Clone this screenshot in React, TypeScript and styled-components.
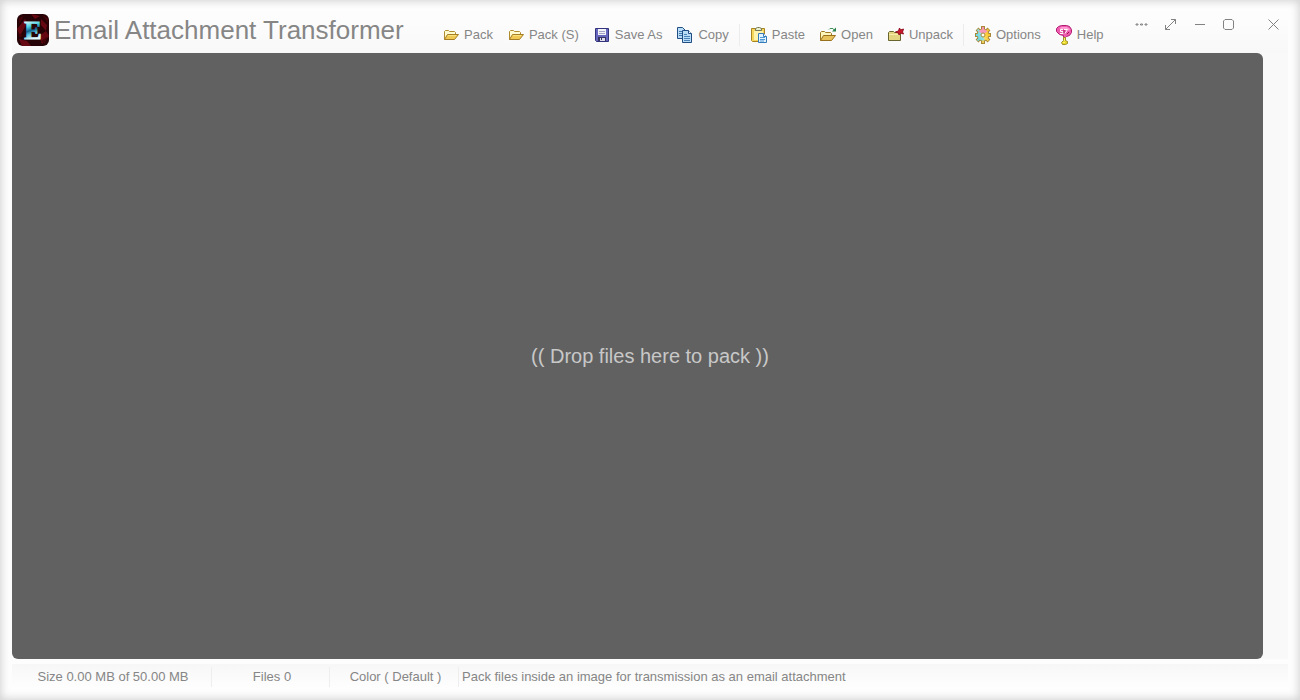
import React from "react";
import styled, { createGlobalStyle } from "styled-components";

const GlobalStyle = createGlobalStyle`
  * { box-sizing: border-box; }
  body {
    margin: 0;
    font-family: "Liberation Sans", Arial, sans-serif;
    font-size: 13px;
    line-height: 16px;
    color: #868686;
    background: #fff;
  }
`;

const Window = styled.div`
  min-height: 100vh;
  display: flex;
  flex-direction: column;
  background: #fdfdfd;
  box-shadow: inset 0 0 8px 1px #cfcfcf;
`;

const TitleBar = styled.header`
  display: flex;
  align-items: flex-start;
  height: 53px;
  margin: 0 12px;
  padding-left: 5px;
  background: linear-gradient(to bottom, transparent 8px, #fdfdfd 16px, #f8f8f8 52px);
`;

const Brand = styled.div`
  flex: 0 0 426px;
  display: flex;
  align-items: center;
  gap: 5px;
  padding-top: 14px;
`;

const Title = styled.h1`
  margin: 0;
  font-size: 26px;
  line-height: 32px;
  font-weight: normal;
  white-space: nowrap;
`;

const Toolbar = styled.nav`
  display: flex;
  align-items: center;
  padding-top: 24px;
`;

const ToolButton = styled.button`
  display: flex;
  align-items: center;
  gap: 5px;
  height: 20px;
  margin: 0 15px 0 0;
  padding: 0;
  border: 0;
  background: none;
  font: inherit;
  color: inherit;
  white-space: nowrap;
  cursor: pointer;
`;

const Separator = styled.span`
  width: 1px;
  height: 22px;
  margin: 0 11px 0 -5px;
  background: #ececec;
`;

const WindowControls = styled.div`
  display: flex;
  margin-left: auto;
  padding-top: 10px;
`;

const ControlButton = styled.button<{ $apart?: boolean }>`
  display: grid;
  place-items: center;
  width: 29px;
  height: 28px;
  margin: 0 0 0 ${(p) => (p.$apart ? "16px" : "0")};
  padding: 0;
  border: 0;
  background: none;
  color: #828282;
  cursor: pointer;
`;

const Middle = styled.div`
  flex: 1;
  display: flex;
  margin: 0 12px;
  padding-right: 25px;
  background: linear-gradient(to right, #fdfdfd 50%, #f9f9f9 50%);
`;

const DropZone = styled.main`
  flex: 1;
  display: grid;
  place-items: center;
  border-radius: 6px;
  background: #616161;
  color: #c8c8c8;
  font-size: 20px;
  line-height: 24px;
  padding-left: 25px;
`;

const StatusBar = styled.footer`
  display: flex;
  align-items: center;
  height: 25px;
  margin: 5px 12px 11px;
  background: linear-gradient(to bottom, #f7f7f7, #fefefe);
`;

const StatusCell = styled.span<{ $width?: number; $line?: boolean }>`
  flex: ${(p) => (p.$width ? `0 0 ${p.$width}px` : "1")};
  padding-left: 3px;
  text-align: ${(p) => (p.$width ? "center" : "left")};
  line-height: 20px;
  border-right: 1px solid ${(p) => (p.$line ? "#eeeeee" : "transparent")};
  white-space: nowrap;
`;

const Logo = () => (
  <svg width="32" height="32" viewBox="0 0 32 32" aria-hidden="true">
    <defs>
      <linearGradient id="letter" x1="0" y1="0" x2="0.200" y2="1">
        <stop offset=".2" stopColor="#dcffff" />
        <stop offset=".4" stopColor="#4fd0e2" />
        <stop offset=".55" stopColor="#12618f" />
        <stop offset=".66" stopColor="#55bfdc" />
        <stop offset=".85" stopColor="#e4fbff" />
      </linearGradient>
      <clipPath id="tile"><rect width="32" height="32" rx="6" /></clipPath>
    </defs>
    <g clipPath="url(#tile)">
      <rect width="32" height="32" fill="#250306" />
      <path d="M0 15L8 5l2 4-7 13zM14 0l9 2-5 3zM24 5l6 6-1 6-5-6zM22 22l7-5 3 5-7 8zM2 25l8 2 4 5H5z" fill="#660811" />
      <path d="M2 4l5-2-5 8zM25 1l6 3v5zM24 27l6-4-2 7zM1 19l5 2-3 3z" fill="#430308" />
    </g>
    <text x="16" y="25" textAnchor="middle" fontFamily="Liberation Serif, serif" fontWeight="bold" fontSize="26" fill="url(#letter)" stroke="url(#letter)" strokeWidth="1">E</text>
  </svg>
);

const Icon = ({ children }: { children: React.ReactNode }) => (
  <svg width="16" height="18" viewBox="0 0 16 18" aria-hidden="true">{children}</svg>
);

const FolderIcon = () => (
  <Icon>
    <path d="M1.5 13.5v-8l1-1h3l1 1h5l1 1v2" fill="#fffbd0" stroke="#b18b30" />
    <path d="M1.5 13.5l3-5h11l-4 5z" fill="#efc954" stroke="#a67d27" />
    <path d="M5 9.5h8" stroke="#f8e37f" />
  </Icon>
);

const SaveIcon = () => (
  <Icon>
    <path d="M1.5 2.5h13v13h-12l-1-1z" fill="#6767bd" stroke="#34347e" />
    <path d="M4 3h8v6H4z" fill="#f3f3fa" />
    <path d="M5 5.5h6M5 7.5h6" stroke="#a4a4c6" />
    <path d="M4 11h8v4H4z" fill="#35355f" />
    <path d="M6 12h5v3H6z" fill="#ddddeb" />
    <path d="M7 12h1v2H7z" fill="#35355f" />
  </Icon>
);

const CopyIcon = () => (
  <Icon>
    <path d="M.5 1.500h5l3 3v8h-8z" fill="#b9dcf7" stroke="#234f87" />
    <path d="M2 5.500h4M2 7.500h4M2 9.500h4" stroke="#3f76ab" />
    <path d="M5.500 4.500h6l3 3v9h-9z" fill="#b9dcf7" stroke="#204c82" />
    <path d="M11.500 4.500v3h3" fill="#fff" stroke="#204c82" />
    <path d="M7 8.500h3M7 10.500h6M7 12.500h6M7 14.500h6" stroke="#4a82b7" />
  </Icon>
);

const PasteIcon = () => (
  <Icon>
    <path d="M.5 2.500h13v13H1.500l-1-1z" fill="#f5d55a" stroke="#a78324" />
    <path d="M3 5h9v9H3z" fill="#fff3ad" />
    <path d="M4.500 4.500v-2l2-1h2l2 1v2z" fill="#e9eed1" stroke="#737650" />
    <path d="M7.500 7.500h5l3 3v6h-8z" fill="#e4f4ff" stroke="#367bb9" />
    <path d="M12.500 7.500v3h3" fill="#fff" stroke="#367bb9" />
    <path d="M9 11.500h5M9 13.500h5M9 15h4" stroke="#4f99d6" />
  </Icon>
);

const OpenIcon = () => (
  <Icon>
    <path d="M.5 14.500v-8l1-1h3l1 1h5l1 1v2" fill="#fff6bb" stroke="#a07a22" />
    <path d="M.5 14.500l3-5h12l-4 5z" fill="#e8c35c" stroke="#98701d" />
    <path d="M9 3.500l1-1h3l1.500 2" fill="none" stroke="#42935e" />
    <path d="M12 5.500h4v-4z" fill="#268047" />
  </Icon>
);

const UnpackIcon = () => (
  <Icon>
    <path d="M.5 14.500v-8l1-1h4l1 1h6v8z" fill="#e4d482" stroke="#68652e" />
    <path d="M1 8.500h11" stroke="#f5ecae" />
    <path d="M11.500 2l1 2 3-1-1 3 1 2-3-1-1.500 2-.5-2-3-1 3-1z" fill="#ce172b" stroke="#951021" />
  </Icon>
);

const OptionsIcon = () => (
  <Icon>
    <defs>
      <linearGradient id="gear" x1="0" y1="0.700" x2="1" y2="0.300">
        <stop offset="0" stopColor="#6fd6e4" />
        <stop offset=".42" stopColor="#9be0dc" />
        <stop offset=".55" stopColor="#ffd95a" />
        <stop offset="1" stopColor="#fac52c" />
      </linearGradient>
    </defs>
    <g stroke="#a8893a" strokeWidth="4">
      <path d="M8 0v18M0 9h16M2 3l12 12M14 3L2 15" />
    </g>
    <circle cx="8" cy="9" r="6.500" fill="#a8893a" />
    <g stroke="url(#gear)" strokeWidth="2">
      <path d="M2.500 3.500l11 11M13.500 3.500l-11 11" />
    </g>
    <path d="M7 1h2v3H7z" fill="#f58fb4" />
    <path d="M7 14h2v3H7z" fill="#f0cf55" />
    <path d="M1 8h3v2H1z" fill="#6fd6e4" />
    <path d="M12 8h3v2h-3z" fill="#fac52c" />
    <circle cx="8" cy="9" r="5.500" fill="url(#gear)" />
    <path d="M3.500 5.500A5.500 5.500 0 0 1 12.500 5.500L10 7H6z" fill="#f799bb" />
    <circle cx="8" cy="9" r="2" fill="#fffdf4" stroke="#a8893a" />
  </Icon>
);

const HelpIcon = () => (
  <svg width="16" height="20" viewBox="0 0 16 20" aria-hidden="true">
    <path d="M.500 3.500l2-2 3-1h5l3 1 2 3v3l-2 3-3 1-1 1h-2v-2l-4-1-3-3z" fill="#ed5aae" stroke="#b01e72" />
    <path d="M3 3l3-1h5l3 2-1 2-2-2H5z" fill="#ff9bd0" />
    <path d="M7 4.500H4.500v2H7v2H4M8 4.500h3.500L9 8.500" fill="none" stroke="#fff" />
    <path d="M8 5v3M11 9l2-2" fill="none" stroke="#971457" />
    <path d="M7.500 12.500h2v3l2 1v2l-2 1h-3l-1-2 2-2z" fill="#e9d72b" stroke="#9f902a" />
    <path d="M8 13h1v3H8zM7 17h2v1H7z" fill="#fff66d" />
  </svg>
);

const ControlIcon = ({ path }: { path: string }) => (
  <svg width="13" height="13" viewBox="0 0 13 13" fill="none" stroke="currentColor" aria-hidden="true">
    <path d={path} />
  </svg>
);

type Tool = { label: string; icon: () => React.ReactElement; separated?: boolean };

const tools: Tool[] = [
  { label: "Pack", icon: FolderIcon },
  { label: "Pack (S)", icon: FolderIcon },
  { label: "Save As", icon: SaveIcon },
  { label: "Copy", icon: CopyIcon },
  { label: "Paste", icon: PasteIcon, separated: true },
  { label: "Open", icon: OpenIcon },
  { label: "Unpack", icon: UnpackIcon },
  { label: "Options", icon: OptionsIcon, separated: true },
  { label: "Help", icon: HelpIcon },
];

const controls = [
  { label: "More", path: "M1 6h2v1H1zM5.500 6h2v1h-2zM10 6h2v1h-2z" },
  { label: "Full screen", path: "M1.500 11.500l10-10M7 1.500h4.500V6M1.500 7v4.500H6" },
  { label: "Minimize", path: "M2 6.500h10" },
  { label: "Maximize", path: "M3 1.500h7l1.500 1.500v7L10 11.500H3L1.500 10V3z" },
  { label: "Close", path: "M1.500 1.500l10 10M11.500 1.500l-10 10" },
];

export default function App() {
  return (
    <>
      <GlobalStyle />
      <Window>
        <TitleBar>
          <Brand>
            <Logo />
            <Title>Email Attachment Transformer</Title>
          </Brand>
          <Toolbar aria-label="Tools">
            {tools.map(({ label, icon: Glyph, separated }) => (
              <React.Fragment key={label}>
                {separated && <Separator />}
                <ToolButton type="button">
                  <Glyph />
                  {label}
                </ToolButton>
              </React.Fragment>
            ))}
          </Toolbar>
          <WindowControls>
            {controls.map(({ label, path }) => (
              <ControlButton key={label} type="button" aria-label={label} $apart={label === "Close"}>
                <ControlIcon path={path} />
              </ControlButton>
            ))}
          </WindowControls>
        </TitleBar>
        <Middle>
          <DropZone>(( Drop files here to pack ))</DropZone>
        </Middle>
        <StatusBar>
          <StatusCell $width={200} $line>Size 0.00 MB of 50.00 MB</StatusCell>
          <StatusCell $width={118} $line>Files 0</StatusCell>
          <StatusCell $width={129} $line>Color ( Default )</StatusCell>
          <StatusCell>Pack files inside an image for transmission as an email attachment</StatusCell>
        </StatusBar>
      </Window>
    </>
  );
}
